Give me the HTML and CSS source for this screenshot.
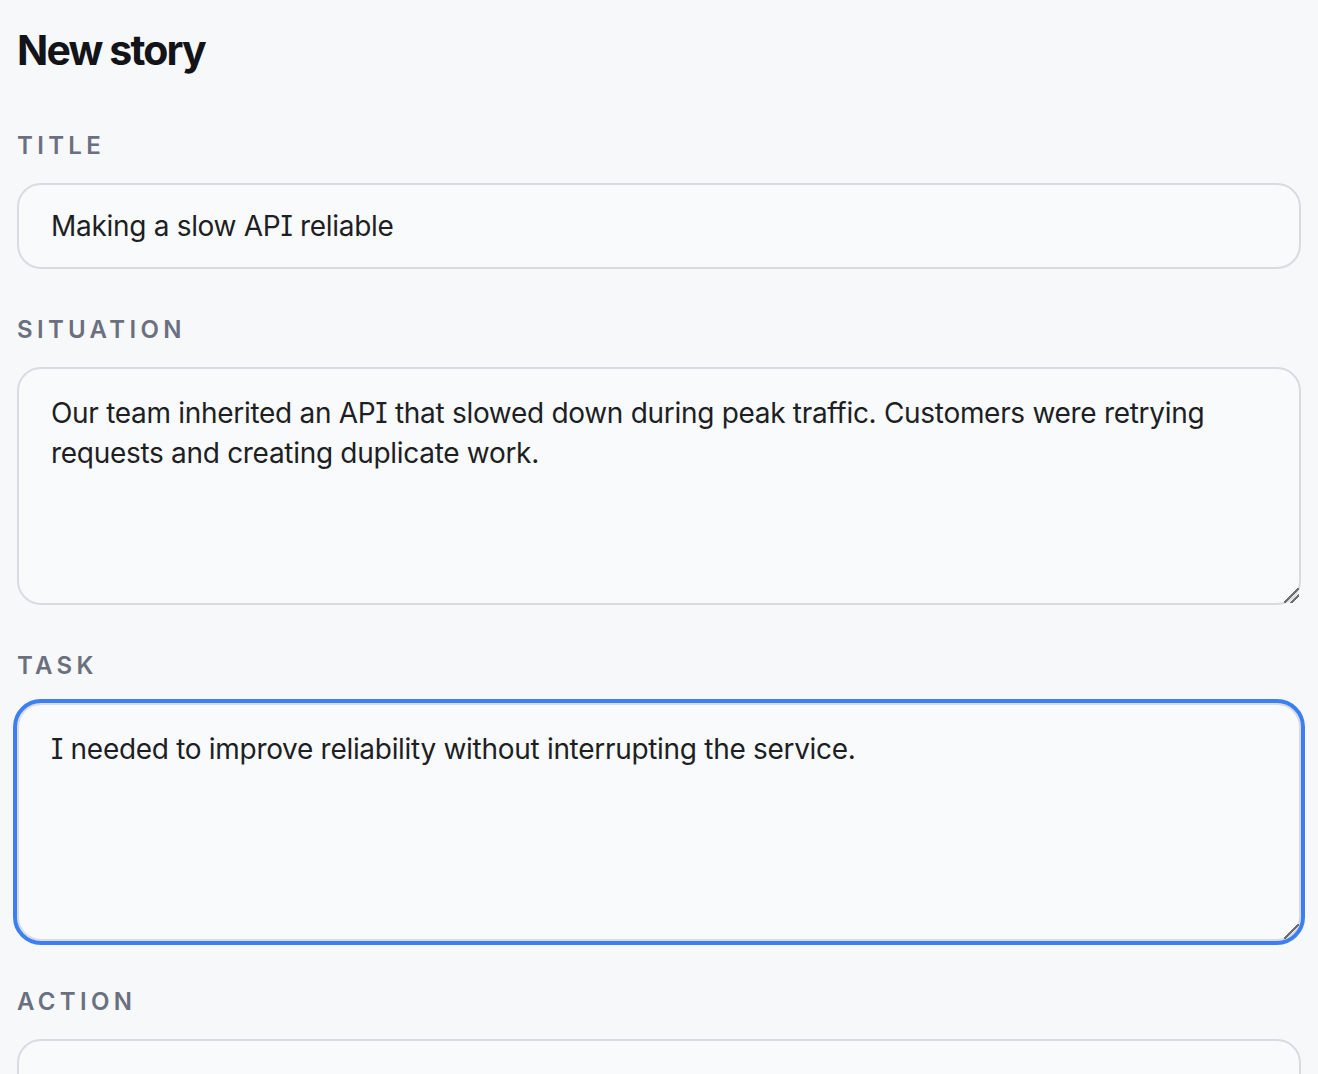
FILE: index.html
```html
<!DOCTYPE html>
<html lang="en">
<head>
<meta charset="utf-8">
<title>New story</title>
<link rel="stylesheet" href="styles.css">
</head>
<body>
<main class="page">
  <h1 class="page-title">New story</h1>
  <form class="story-form">
    <div class="field">
      <label class="field-label" for="title">Title</label>
      <input class="field-input" id="title" type="text" value="Making a slow API reliable">
    </div>
    <div class="field">
      <label class="field-label" for="situation">Situation</label>
      <textarea class="field-input field-area" id="situation">Our team inherited an API that slowed down during peak traffic. Customers were retrying requests and creating duplicate work.</textarea>
    </div>
    <div class="field">
      <label class="field-label" for="task">Task</label>
      <textarea class="field-input field-area is-focused" id="task">I needed to improve reliability without interrupting the service.</textarea>
    </div>
    <div class="field">
      <label class="field-label" for="action">Action</label>
      <textarea class="field-input field-area" id="action"></textarea>
    </div>
  </form>
</main>
</body>
</html>
```

FILE: styles.css
```css
html, body {
  margin: 0;
  padding: 0;
  background: #f7f8fa;
}

body {
  font-family: Inter, "Noto Sans", "Liberation Sans", sans-serif;
  color: #1d1f24;
}

.page {
  padding: 25px 17px 40px;
}

.page-title {
  margin: 0 0 54px;
  font-size: 41px;
  line-height: 51px;
  font-weight: 700;
  letter-spacing: -0.045em;
  color: #121419;
}

.story-form {
  display: flex;
  flex-direction: column;
  gap: 45px;
}

.field {
  display: flex;
  flex-direction: column;
}

.field-label {
  display: block;
  margin-bottom: 21px;
  font-size: 24px;
  line-height: 32px;
  font-weight: 600;
  letter-spacing: 0.18em;
  text-transform: uppercase;
  color: #6b7080;
}

.field-input {
  box-sizing: border-box;
  width: 100%;
  margin: 0;
  padding: 24px 32px;
  border: 2px solid #d9dbe1;
  border-radius: 24px;
  background: #f9fafb;
  font-family: Inter, "Noto Sans", "Liberation Sans", sans-serif;
  font-feature-settings: "cv08" 1;
  font-size: 28px;
  line-height: 34px;
  letter-spacing: -0.3px;
  color: #1d1f24;
  outline: none;
}

.field-area {
  display: block;
  height: 238px;
  line-height: 40px;
  resize: vertical;
}

.field-area::-webkit-scrollbar {
  width: 16px;
  height: 16px;
  background: transparent;
}

.field-area::-webkit-resizer {
  background: linear-gradient(135deg,
    transparent 0,
    transparent 45%,
    #6e6e6e 45%,
    #6e6e6e 54%,
    transparent 54%,
    transparent 68%,
    #6e6e6e 68%,
    #6e6e6e 77%,
    transparent 77%);
}

.is-focused {
  outline: 4px solid #3b7ff3;
  outline-offset: 0;
}
```
